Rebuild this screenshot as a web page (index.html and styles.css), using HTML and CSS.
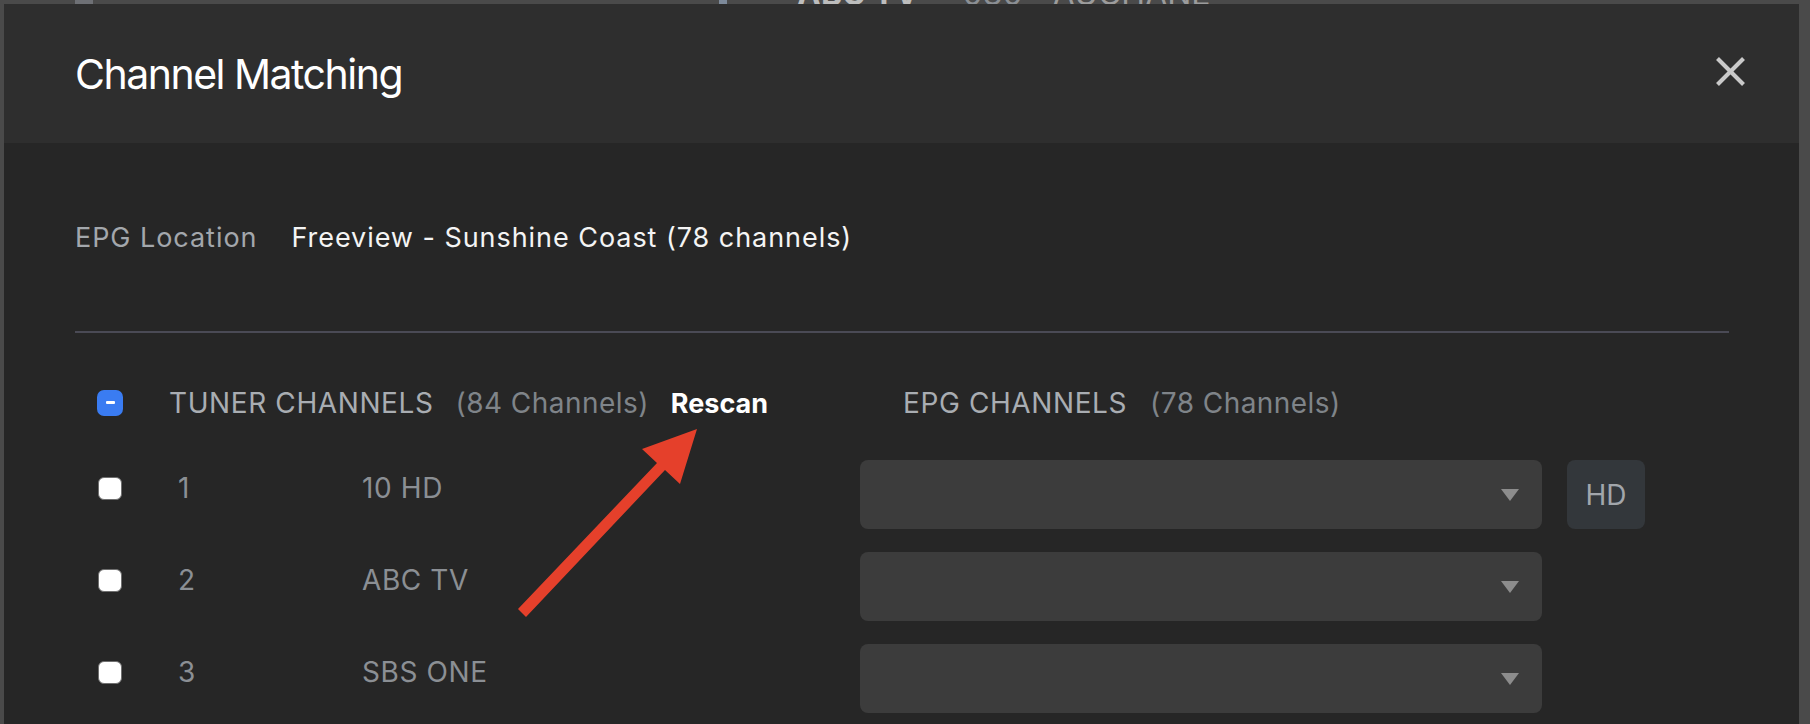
FILE: index.html
```html
<!DOCTYPE html>
<html lang="en">
<head>
<meta charset="utf-8">
<title>Channel Matching</title>
<link rel="stylesheet" href="styles.css">
</head>
<body>
<div class="page">
  <div class="backdrop-strip">
    <span class="bd-bar"></span>
    <span class="bd-bar blue"></span>
    <span class="bd-text bold">ABC TV</span>
    <span class="bd-text num">030</span>
    <span class="bd-text">AUCHANE</span>
  </div>
  <div class="modal">
    <div class="modal-header">
      <h1 class="title">Channel Matching</h1>
      <svg class="close" width="31" height="31" viewBox="0 0 31 31" aria-label="Close">
        <line x1="2.5" y1="2.5" x2="28.5" y2="28.5" stroke="#c9c9c9" stroke-width="4"/>
        <line x1="28.5" y1="2.5" x2="2.5" y2="28.5" stroke="#c9c9c9" stroke-width="4"/>
      </svg>
    </div>
    <div class="modal-body">
      <div class="location-row">
        <span class="loc-label">EPG Location</span>
        <span class="loc-value">Freeview - Sunshine Coast (78 channels)</span>
      </div>
      <div class="divider"></div>
      <div class="grid header-row">
        <span class="cb cb-mixed"><span class="dash"></span></span>
        <div class="tuner-head">
          <span class="head-label">TUNER CHANNELS</span>
          <span class="head-count">(84 Channels)</span>
          <span class="rescan">Rescan</span>
        </div>
        <div class="epg-head">
          <span class="head-label">EPG CHANNELS</span>
          <span class="head-count">(78 Channels)</span>
        </div>
      </div>
      <div class="grid row">
        <span class="cb"></span>
        <span class="num">1</span>
        <span class="name">10 HD</span>
        <div class="match">
          <div class="select"><span class="caret"></span></div>
          <div class="hd">HD</div>
        </div>
      </div>
      <div class="grid row">
        <span class="cb"></span>
        <span class="num">2</span>
        <span class="name">ABC TV</span>
        <div class="match">
          <div class="select"><span class="caret"></span></div>
        </div>
      </div>
      <div class="grid row">
        <span class="cb"></span>
        <span class="num">3</span>
        <span class="name">SBS ONE</span>
        <div class="match">
          <div class="select"><span class="caret"></span></div>
        </div>
      </div>
    </div>
  </div>
  <svg class="annotation" width="1810" height="724" viewBox="0 0 1810 724">
    <polygon fill="#e5402b" points="697,429 680,484 665,470 526,617 518,609 657,463 642,449"/>
  </svg>
</div>
</body>
</html>
```

FILE: styles.css
```css
* { box-sizing: border-box; }
html, body {
  margin: 0;
  padding: 0;
  background: #4a4a4a;
  overflow: hidden;
}
.page {
  position: relative;
  width: 1810px;
  height: 724px;
  overflow: hidden;
  font-family: "Inter", "Liberation Sans", sans-serif;
}
.backdrop-strip {
  height: 4px;
  overflow: hidden;
  display: flex;
  align-items: flex-start;
  padding-left: 75px;
  background: #4a4a4a;
}
.bd-bar {
  width: 18px;
  height: 4px;
  background: #6e7075;
  flex: none;
}
.bd-bar.blue {
  width: 8px;
  background: #7d8a9a;
  margin-left: 626px;
}
.bd-text {
  font-size: 32px;
  line-height: 32px;
  margin-top: -22px;
  color: #9c9c9c;
  white-space: nowrap;
}
.bd-text.bold {
  font-weight: 700;
  margin-left: 70px;
  color: #bdbdbd;
}
.bd-text.num { margin-left: 44px; }
.bd-text:last-child { margin-left: 30px; }

.modal {
  margin-left: 4px;
  width: 1795px;
  height: 720px;
  background: #262626;
}
.modal-header {
  height: 139px;
  background: #2e2e2e;
  display: flex;
  align-items: center;
  justify-content: space-between;
  padding: 0 53px 0 71px;
}
.title {
  margin: 0;
  font-size: 41px;
  font-weight: 400;
  letter-spacing: -1.5px;
  color: #ffffff;
  line-height: 1;
  padding-top: 2px;
}
.close { display: block; flex: none; margin-top: -5px; }

.modal-body {
  padding: 0 70px 0 71px;
}
.location-row {
  height: 188px;
  display: flex;
  align-items: center;
  gap: 34px;
  font-size: 27px;
  letter-spacing: 0.95px;
}
.loc-label { color: #a3a7ac; }
.loc-value { color: #f4f4f4; }
.divider {
  height: 2px;
  background: #4a4a55;
}

.grid {
  display: grid;
  grid-template-columns: 81px 184px 498px 1fr;
  margin-left: 22px;
  align-items: center;
  font-size: 28px;
  letter-spacing: 0.6px;
}
.header-row {
  height: 109px;
  padding-top: 30px;
}
.tuner-head {
  grid-column: 2 / 4;
  display: flex;
  align-items: baseline;
  gap: 22px;
  margin-left: -9px;
}
.epg-head {
  display: flex;
  align-items: baseline;
  gap: 23px;
  padding-left: 43px;
}
.head-label { color: #a9adb2; }
.head-count { color: #7f8489; letter-spacing: 0.45px; }
.rescan { color: #ffffff; font-weight: 700; font-size: 27px; letter-spacing: 0; }

.cb {
  width: 24px;
  height: 23px;
  margin-left: 1px;
  border-radius: 6px;
  background: #ffffff;
  border: 1px solid #6f6f6f;
  display: flex;
  align-items: center;
  justify-content: center;
}
.cb-mixed {
  width: 26px;
  height: 26px;
  margin-left: 0;
  background: #3a7cf2;
  border: none;
  border-radius: 7px;
}
.dash {
  width: 9px;
  height: 3px;
  border-radius: 1px;
  background: #ffffff;
}
.row { height: 92px; }
.num, .name { color: #8b8f94; }
.match {
  display: flex;
  gap: 25px;
  margin-top: 13px;
}
.select {
  width: 682px;
  height: 69px;
  background: #3c3c3c;
  border-radius: 8px;
  display: flex;
  align-items: center;
  justify-content: flex-end;
  padding-right: 23px;
}
.caret {
  width: 0;
  height: 0;
  border-left: 9px solid transparent;
  border-right: 9px solid transparent;
  border-top: 12px solid #8c8c8c;
  margin-top: 1px;
}
.hd {
  width: 78px;
  height: 69px;
  background: #33373b;
  border-radius: 8px;
  color: #a2a6ab;
  display: flex;
  align-items: center;
  justify-content: center;
  font-size: 28px;
  letter-spacing: 0;
}
.annotation {
  position: absolute;
  left: 0;
  top: 0;
  pointer-events: none;
}
```
